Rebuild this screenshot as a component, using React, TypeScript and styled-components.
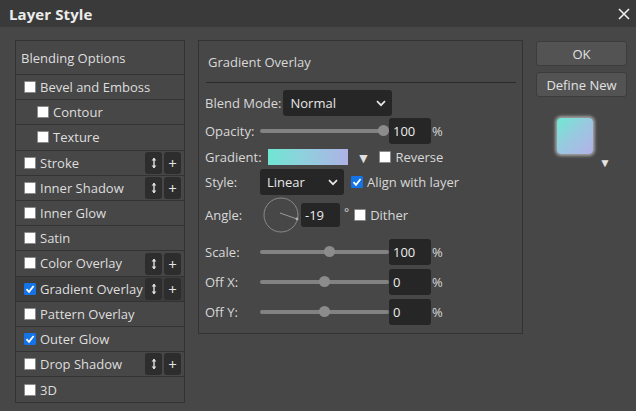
import React from 'react';
import styled, { createGlobalStyle } from 'styled-components';

const GlobalStyle = createGlobalStyle`
  html, body {
    margin: 0;
    padding: 0;
    background: #474747;
  }
  body {
    font-family: "Open Sans", "Liberation Sans", sans-serif;
    font-size: 13px;
    color: #dedede;
  }
`;

interface Effect {
  label: string;
  checked?: boolean;
  indent?: boolean;
  tools?: boolean;
  selected?: boolean;
}

const effects: Effect[] = [
  { label: 'Bevel and Emboss' },
  { label: 'Contour', indent: true },
  { label: 'Texture', indent: true },
  { label: 'Stroke', tools: true },
  { label: 'Inner Shadow', tools: true },
  { label: 'Inner Glow' },
  { label: 'Satin' },
  { label: 'Color Overlay', tools: true },
  { label: 'Gradient Overlay', checked: true, tools: true, selected: true },
  { label: 'Pattern Overlay' },
  { label: 'Outer Glow', checked: true },
  { label: 'Drop Shadow', tools: true },
  { label: '3D' },
];

function Check({ checked }: { checked?: boolean }) {
  return (
    <CheckBox $checked={checked}>
      {checked ? (
        <svg width="10" height="10" viewBox="0 0 10 10">
          <path d="M1.5 5.2 L4 7.8 L8.6 2" fill="none" stroke="#fff" strokeWidth="1.8" />
        </svg>
      ) : null}
    </CheckBox>
  );
}

function Chevron() {
  return (
    <svg width="10" height="7" viewBox="0 0 10 7">
      <path d="M1 1.2 L5 5.2 L9 1.2" fill="none" stroke="#e6e6e6" strokeWidth="1.7" />
    </svg>
  );
}

function Slider({ thumb }: { thumb: number }) {
  return (
    <Track>
      <Thumb style={{ left: thumb }} />
    </Track>
  );
}

function App() {
  return (
    <Dialog>
      <GlobalStyle />
      <TitleBar>
        <Title>Layer Style</Title>
        <svg width="12" height="12" viewBox="0 0 12 12">
          <path d="M1 1 L11 11 M11 1 L1 11" stroke="#eeeeee" strokeWidth="1.6" />
        </svg>
      </TitleBar>
      <Body>
        <EffectList>
          <ListHeader>Blending Options</ListHeader>
          {effects.map((e) => (
            <EffectRow key={e.label} $indent={e.indent} $selected={e.selected}>
              <Check checked={e.checked} />
              <EffectName>{e.label}</EffectName>
              {e.tools ? (
                <Tools>
                  <ToolButton>
                    <svg width="6" height="12" viewBox="0 0 6 12">
                      <path d="M3 1 V11" stroke="#e0e0e0" strokeWidth="1.4" />
                      <path d="M0.6 3.6 L3 0.8 L5.4 3.6 Z M0.6 8.4 L3 11.2 L5.4 8.4 Z" fill="#e0e0e0" />
                    </svg>
                  </ToolButton>
                  <ToolButton>+</ToolButton>
                </Tools>
              ) : null}
            </EffectRow>
          ))}
        </EffectList>

        <Settings>
          <SettingsTitle>Gradient Overlay</SettingsTitle>
          <Rule />
          <Controls>
            <Row $h={26} $mt={7}>
              <Label>Blend Mode:</Label>
              <Select $w={109} $ml={2}>
                Normal
                <Chevron />
              </Select>
            </Row>
            <Row $h={26} $mt={2}>
              <Label $w={55}>Opacity:</Label>
              <Slider thumb={123} />
              <NumberBox>100</NumberBox>
              <Unit>%</Unit>
            </Row>
            <Row $h={22} $mt={2}>
              <Label>Gradient:</Label>
              <GradientBar />
              <Caret>▼</Caret>
              <Check />
              <CheckLabel>Reverse</CheckLabel>
            </Row>
            <Row $h={26} $mt={1}>
              <Label $w={55}>Style:</Label>
              <Select $w={84}>
                Linear
                <Chevron />
              </Select>
              <Spacer $w={7} />
              <Check checked />
              <CheckLabel>Align with layer</CheckLabel>
            </Row>
            <Row $h={36} $mt={2}>
              <Label $w={58}>Angle:</Label>
              <svg width="36" height="36" viewBox="0 0 36 36">
                <circle cx="18" cy="18" r="17" fill="none" stroke="#8a8a8a" strokeWidth="1" />
                <line x1="17" y1="16" x2="34" y2="22" stroke="#9a9a9a" strokeWidth="1" />
                <circle cx="34" cy="22" r="1.4" fill="#b0b0b0" />
              </svg>
              <NumberBox $w={39} $h={24} $ml={2}>-19</NumberBox>
              <Degree>°</Degree>
              <Check />
              <CheckLabel>Dither</CheckLabel>
            </Row>
            <Row $h={26} $mt={6}>
              <Label $w={55}>Scale:</Label>
              <Slider thumb={69} />
              <NumberBox>100</NumberBox>
              <Unit>%</Unit>
            </Row>
            <Row $h={26} $mt={4}>
              <Label $w={55}>Off X:</Label>
              <Slider thumb={64} />
              <NumberBox>0</NumberBox>
              <Unit>%</Unit>
            </Row>
            <Row $h={26} $mt={4}>
              <Label $w={55}>Off Y:</Label>
              <Slider thumb={64} />
              <NumberBox>0</NumberBox>
              <Unit>%</Unit>
            </Row>
          </Controls>
        </Settings>

        <Actions>
          <Button>OK</Button>
          <Button>Define New</Button>
          <Preview>
            <Swatch />
            <PreviewCaret>▼</PreviewCaret>
          </Preview>
        </Actions>
      </Body>
    </Dialog>
  );
}

const Dialog = styled.div`
  width: 636px;
  height: 411px;
  background: #474747;
  overflow: hidden;
`;

const TitleBar = styled.div`
  height: 27px;
  background: #3a3a3a;
  display: flex;
  align-items: center;
  justify-content: space-between;
  padding: 0 6px 0 9px;
  box-sizing: border-box;
`;

const Title = styled.div`
  font-weight: 700;
  font-size: 15px;
  color: #ececec;
  letter-spacing: 0.1px;
`;

const Body = styled.div`
  display: flex;
  align-items: flex-start;
  padding: 13px 0 0 15px;
`;

const EffectList = styled.div`
  width: 170px;
  border: 1px solid #333333;
  box-sizing: border-box;
`;

const ListHeader = styled.div`
  height: 34px;
  display: flex;
  align-items: center;
  padding-left: 5px;
  border-bottom: 1px solid #333333;
  box-sizing: border-box;
`;

const EffectRow = styled.div<{ $indent?: boolean; $selected?: boolean }>`
  height: 25.2px;
  display: flex;
  align-items: center;
  padding-left: ${(p) => (p.$indent ? 21 : 8)}px;
  padding-right: 3px;
  border-bottom: 1px solid #333333;
  box-sizing: border-box;
  background: ${(p) => (p.$selected ? '#3d3d3d' : 'transparent')};
  &:last-child {
    border-bottom: none;
  }
`;

const EffectName = styled.span`
  margin-left: 4px;
  white-space: nowrap;
`;

const Tools = styled.div`
  margin-left: auto;
  display: flex;
  gap: 2px;
  align-self: flex-end;
  padding-bottom: 1px;
`;

const ToolButton = styled.div`
  width: 17px;
  height: 22px;
  border-radius: 3px;
  background: #2d2d2d;
  color: #e6e6e6;
  font-size: 15px;
  display: flex;
  align-items: center;
  justify-content: center;
`;

const CheckBox = styled.div<{ $checked?: boolean }>`
  width: 12px;
  height: 12px;
  flex: none;
  box-sizing: border-box;
  border-radius: 1px;
  border: 1px solid ${(p) => (p.$checked ? '#1473e6' : '#8a8a8a')};
  background: ${(p) => (p.$checked ? '#1473e6' : '#ffffff')};
  display: flex;
  align-items: center;
  justify-content: center;
`;

const Settings = styled.div`
  width: 325px;
  height: 294px;
  margin-left: 13px;
  border: 1px solid #333333;
  box-sizing: border-box;
  color: #d8d8d8;
`;

const SettingsTitle = styled.div`
  padding: 12px 0 0 9px;
  height: 40px;
  box-sizing: border-box;
  line-height: 18px;
`;

const Rule = styled.div`
  height: 1px;
  margin: 1px 6px 0 7px;
  background: #2b2b2b;
`;

const Controls = styled.div`
  padding-left: 6px;
  display: flex;
  flex-direction: column;
`;

const Row = styled.div<{ $h: number; $mt: number }>`
  height: ${(p) => p.$h}px;
  margin-top: ${(p) => p.$mt}px;
  display: flex;
  align-items: center;
`;

const Label = styled.span<{ $w?: number }>`
  width: ${(p) => (p.$w ? `${p.$w}px` : 'auto')};
  flex: none;
  white-space: nowrap;
`;

const Select = styled.div<{ $w: number; $ml?: number }>`
  width: ${(p) => p.$w}px;
  height: 26px;
  margin-left: ${(p) => p.$ml ?? 0}px;
  box-sizing: border-box;
  background: #262626;
  border-radius: 3px;
  color: #e6e6e6;
  display: flex;
  align-items: center;
  justify-content: space-between;
  padding: 0 6px 0 7px;
`;

const Track = styled.div`
  position: relative;
  width: 129px;
  height: 4px;
  border-radius: 2px;
  background: #828282;
  flex: none;
`;

const Thumb = styled.div`
  position: absolute;
  top: -4px;
  width: 11px;
  height: 11px;
  margin-left: -5.5px;
  border-radius: 50%;
  background: #8c8c8c;
`;

const NumberBox = styled.div<{ $w?: number; $h?: number; $ml?: number }>`
  width: ${(p) => p.$w ?? 42}px;
  height: ${(p) => p.$h ?? 26}px;
  margin-left: ${(p) => p.$ml ?? 0}px;
  box-sizing: border-box;
  background: #262626;
  border-radius: 3px;
  color: #ececec;
  padding-left: 4px;
  display: flex;
  align-items: center;
  flex: none;
`;

const Unit = styled.span`
  margin-left: 1px;
`;

const Degree = styled.span`
  margin: -6px 5px 0 4px;
  font-size: 12px;
`;

const GradientBar = styled.div`
  width: 80px;
  height: 16px;
  margin-left: 6px;
  background: linear-gradient(90deg, #6fe6d2 0%, #8fd0dd 45%, #aeb2e6 100%);
`;

const Caret = styled.span`
  margin: 0 9px 0 9px;
  font-size: 14px;
  color: #e0e0e0;
`;

const CheckLabel = styled.span`
  margin-left: 4px;
  white-space: nowrap;
`;

const Spacer = styled.div<{ $w: number }>`
  width: ${(p) => p.$w}px;
  flex: none;
`;

const Actions = styled.div`
  width: 91px;
  margin-left: 13px;
  margin-top: 1px;
  display: flex;
  flex-direction: column;
  gap: 6px;
`;

const Button = styled.div`
  height: 25px;
  box-sizing: border-box;
  background: #535353;
  border: 1px solid #3c3c3c;
  border-radius: 3px;
  color: #e2e2e2;
  display: flex;
  align-items: center;
  justify-content: center;
`;

const Preview = styled.div`
  position: relative;
  margin: 15px 0 0 21px;
  height: 52px;
`;

const Swatch = styled.div`
  width: 36px;
  height: 36px;
  border-radius: 4px;
  background: linear-gradient(135deg, #70e8d2 0%, #9ac8e0 50%, #b3b1e8 100%);
  box-shadow: 0 0 3px 2px rgba(235, 235, 235, 0.55);
`;

const PreviewCaret = styled.span`
  position: absolute;
  left: 42px;
  top: 36px;
  font-size: 12px;
  color: #e4e4e4;
`;

export default App;
